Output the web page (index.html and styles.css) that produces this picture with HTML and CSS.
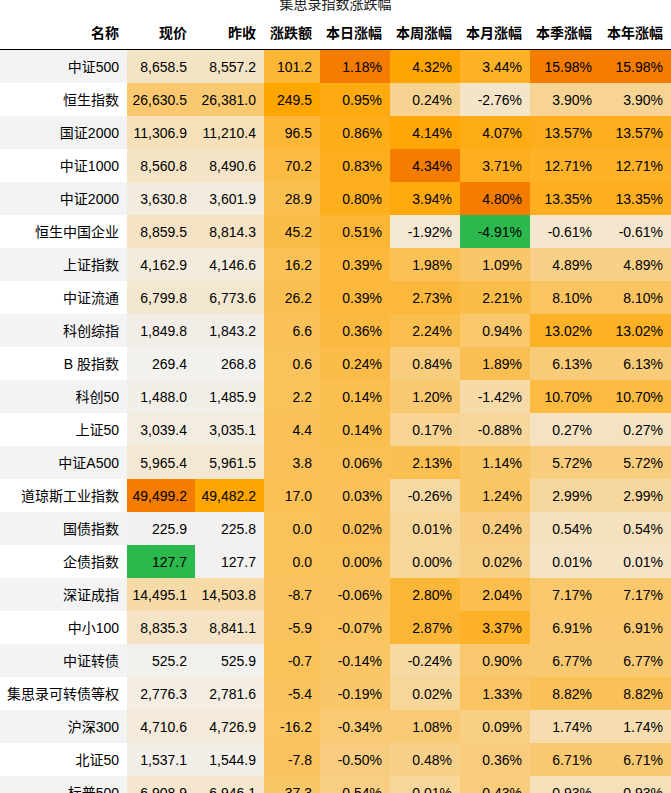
FILE: index.html
```html
<!DOCTYPE html>
<html lang="zh">
<head>
<meta charset="utf-8">
<title>集思录指数涨跌幅</title>
<link rel="stylesheet" href="styles.css">
<script src="script.js" defer></script>
</head>
<body>
<div class="title">集思录指数涨跌幅</div>
<table class="grid">
<colgroup>
<col class="c-name"><col class="c-price"><col class="c-prev"><col class="c-chg"><col class="c-pct"><col class="c-pct"><col class="c-pct"><col class="c-pct"><col class="c-last">
</colgroup>
<thead>
<tr><th>名称</th><th>现价</th><th>昨收</th><th>涨跌额</th><th>本日涨幅</th><th>本周涨幅</th><th>本月涨幅</th><th>本季涨幅</th><th>本年涨幅</th></tr>
</thead>
<tbody>
<tr><td class="name">中证500</td><td>8,658.5</td><td>8,557.2</td><td>101.2</td><td class="hmax">1.18%</td><td>4.32%</td><td>3.44%</td><td class="hmax">15.98%</td><td class="hmax">15.98%</td></tr>
<tr><td class="name">恒生指数</td><td>26,630.5</td><td>26,381.0</td><td>249.5</td><td>0.95%</td><td>0.24%</td><td>-2.76%</td><td>3.90%</td><td>3.90%</td></tr>
<tr><td class="name">国证2000</td><td>11,306.9</td><td>11,210.4</td><td>96.5</td><td>0.86%</td><td>4.14%</td><td>4.07%</td><td>13.57%</td><td>13.57%</td></tr>
<tr><td class="name">中证1000</td><td>8,560.8</td><td>8,490.6</td><td>70.2</td><td>0.83%</td><td class="hmax">4.34%</td><td>3.71%</td><td>12.71%</td><td>12.71%</td></tr>
<tr><td class="name">中证2000</td><td>3,630.8</td><td>3,601.9</td><td>28.9</td><td>0.80%</td><td>3.94%</td><td class="hmax">4.80%</td><td>13.35%</td><td>13.35%</td></tr>
<tr><td class="name">恒生中国企业</td><td>8,859.5</td><td>8,814.3</td><td>45.2</td><td>0.51%</td><td>-1.92%</td><td class="hmin">-4.91%</td><td>-0.61%</td><td>-0.61%</td></tr>
<tr><td class="name">上证指数</td><td>4,162.9</td><td>4,146.6</td><td>16.2</td><td>0.39%</td><td>1.98%</td><td>1.09%</td><td>4.89%</td><td>4.89%</td></tr>
<tr><td class="name">中证流通</td><td>6,799.8</td><td>6,773.6</td><td>26.2</td><td>0.39%</td><td>2.73%</td><td>2.21%</td><td>8.10%</td><td>8.10%</td></tr>
<tr><td class="name">科创综指</td><td>1,849.8</td><td>1,843.2</td><td>6.6</td><td>0.36%</td><td>2.24%</td><td>0.94%</td><td>13.02%</td><td>13.02%</td></tr>
<tr><td class="name">B 股指数</td><td>269.4</td><td>268.8</td><td>0.6</td><td>0.24%</td><td>0.84%</td><td>1.89%</td><td>6.13%</td><td>6.13%</td></tr>
<tr><td class="name">科创50</td><td>1,488.0</td><td>1,485.9</td><td>2.2</td><td>0.14%</td><td>1.20%</td><td>-1.42%</td><td>10.70%</td><td>10.70%</td></tr>
<tr><td class="name">上证50</td><td>3,039.4</td><td>3,035.1</td><td>4.4</td><td>0.14%</td><td>0.17%</td><td>-0.88%</td><td>0.27%</td><td>0.27%</td></tr>
<tr><td class="name">中证A500</td><td>5,965.4</td><td>5,961.5</td><td>3.8</td><td>0.06%</td><td>2.13%</td><td>1.14%</td><td>5.72%</td><td>5.72%</td></tr>
<tr><td class="name">道琼斯工业指数</td><td class="hmax">49,499.2</td><td>49,482.2</td><td>17.0</td><td>0.03%</td><td>-0.26%</td><td>1.24%</td><td>2.99%</td><td>2.99%</td></tr>
<tr><td class="name">国债指数</td><td>225.9</td><td>225.8</td><td>0.0</td><td>0.02%</td><td>0.01%</td><td>0.24%</td><td>0.54%</td><td>0.54%</td></tr>
<tr><td class="name">企债指数</td><td class="hmin">127.7</td><td>127.7</td><td>0.0</td><td>0.00%</td><td>0.00%</td><td>0.02%</td><td>0.01%</td><td>0.01%</td></tr>
<tr><td class="name">深证成指</td><td>14,495.1</td><td>14,503.8</td><td>-8.7</td><td>-0.06%</td><td>2.80%</td><td>2.04%</td><td>7.17%</td><td>7.17%</td></tr>
<tr><td class="name">中小100</td><td>8,835.3</td><td>8,841.1</td><td>-5.9</td><td>-0.07%</td><td>2.87%</td><td>3.37%</td><td>6.91%</td><td>6.91%</td></tr>
<tr><td class="name">中证转债</td><td>525.2</td><td>525.9</td><td>-0.7</td><td>-0.14%</td><td>-0.24%</td><td>0.90%</td><td>6.77%</td><td>6.77%</td></tr>
<tr><td class="name">集思录可转债等权</td><td>2,776.3</td><td>2,781.6</td><td>-5.4</td><td>-0.19%</td><td>0.02%</td><td>1.33%</td><td>8.82%</td><td>8.82%</td></tr>
<tr><td class="name">沪深300</td><td>4,710.6</td><td>4,726.9</td><td>-16.2</td><td>-0.34%</td><td>1.08%</td><td>0.09%</td><td>1.74%</td><td>1.74%</td></tr>
<tr><td class="name">北证50</td><td>1,537.1</td><td>1,544.9</td><td>-7.8</td><td>-0.50%</td><td>0.48%</td><td>0.36%</td><td>6.71%</td><td>6.71%</td></tr>
<tr><td class="name">标普500</td><td>6,908.9</td><td>6,946.1</td><td>-37.3</td><td>-0.54%</td><td>0.01%</td><td>0.43%</td><td>0.93%</td><td>0.93%</td></tr>
</tbody>
</table>
</body>
</html>
```
FILE: styles.css
```css
html, body {
  margin: 0;
  padding: 0;
  background: #ffffff;
}
body {
  font-family: "Liberation Sans", Arial, "Noto Sans CJK SC", sans-serif;
  font-size: 14px;
  color: #000;
  overflow: hidden;
}
.title {
  width: 671px;
  margin-top: -5px;
  line-height: 18px;
  text-align: center;
  color: #222;
}
.grid {
  width: 671px;
  table-layout: fixed;
  border-collapse: collapse;
  border-spacing: 0;
}
.c-name { width: 127px; }
.c-price { width: 68px; }
.c-prev { width: 69px; }
.c-chg { width: 56px; }
.c-pct { width: 70px; }
.c-last { width: 71px; }
.grid th {
  font-weight: bold;
  text-align: right;
  padding: 11px 8px 7px 0;
  line-height: 18px;
  white-space: nowrap;
  background: #fff;
  border-bottom: 1px solid #000;
}
.grid td {
  height: 33px;
  padding: 0 8px 0 0;
  line-height: 18px;
  text-align: right;
  vertical-align: middle;
  white-space: nowrap;
}
.grid tbody tr:nth-child(odd) td.name { background: #f3f3f3; }
.grid tbody tr:nth-child(even) td.name { background: #ffffff; }
.grid td.hmax { background: #f47c00; }
.grid td.hmin { background: #2bb84c; }
```
FILE: script.js
```js
(function () {
  var cfg = [
    null,
    { min: 127.7, max: 49499.2, g: 1 },
    { min: 127.7, max: 49482.2, g: 1 },
    { min: -407, max: 249.5, g: 1 },
    { min: -2.41, max: 1.18, g: 1.2 },
    { min: -3.2, max: 4.34, g: 1.2 },
    { min: -4.91, max: 4.80, g: 1.2 },
    { min: -3.5, max: 15.98, g: 1 },
    { min: -3.5, max: 15.98, g: 1 }
  ];
  var c0 = [242, 241, 239];
  var c1 = [255, 165, 0];
  var rows = document.querySelectorAll('.grid tbody tr');
  rows.forEach(function (tr) {
    Array.prototype.forEach.call(tr.children, function (td, i) {
      if (i === 0 || td.classList.contains('hmax') || td.classList.contains('hmin')) return;
      var v = parseFloat(td.textContent.replace(/[,%]/g, ''));
      var c = cfg[i];
      var t = (v - c.min) / (c.max - c.min);
      t = Math.max(0, Math.min(1, t));
      var s = Math.pow(t, c.g);
      var r = Math.round(c0[0] + (c1[0] - c0[0]) * s);
      var g = Math.round(c0[1] + (c1[1] - c0[1]) * s);
      var b = Math.round(c0[2] + (c1[2] - c0[2]) * s);
      td.style.backgroundColor = 'rgb(' + r + ',' + g + ',' + b + ')';
    });
  });
})();
```
